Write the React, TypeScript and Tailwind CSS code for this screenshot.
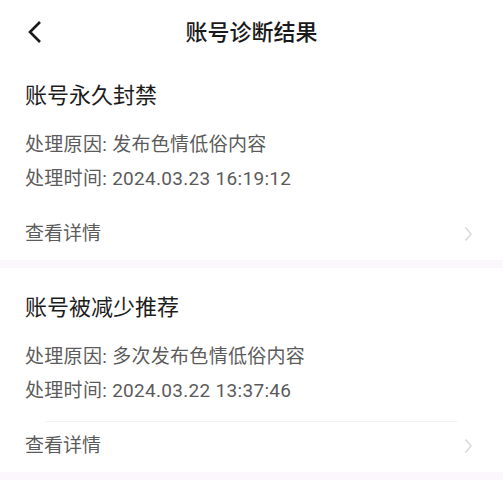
import React from 'react';

type Diagnosis = {
  title: string;
  reason: string;
  time: string;
  divider?: boolean;
};

const items: Diagnosis[] = [
  {
    title: '账号永久封禁',
    reason: '发布色情低俗内容',
    time: '2024.03.23 16:19:12'
  },
  {
    title: '账号被减少推荐',
    reason: '多次发布色情低俗内容',
    time: '2024.03.22 13:37:46',
    divider: true
  }
];

const font = {
  fontFamily: 'Roboto, "Noto Sans CJK SC", "Noto Sans", sans-serif'
};

const ResultCard = ({ item, first }: { item: Diagnosis; first: boolean }) => (
  <div className={first ? 'flex flex-col bg-white pt-[21px] pb-[2px]' : 'flex flex-col bg-white pt-[23px] pb-[2px]'}>
    <div className="px-[25px] h-[32px] flex items-center text-[22px] text-[#1c1c1c]">
      {item.title}
    </div>
    <div className="mt-[17px] px-[25px] flex flex-col text-[19px] tracking-[0.3px] text-[#5b5b5b]">
      <div className="h-[34px] flex items-center">处理原因: {item.reason}</div>
      <div className="h-[34px] flex items-center">处理时间: {item.time}</div>
    </div>
    <div className="mx-[45px] mt-[13px] h-px">
      {item.divider && <div className="h-px bg-[#f3f3f3]" />}
    </div>
    <div className="px-[25px] h-[48px] flex items-center justify-between text-[19px] text-[#5b5b5b]">
      <span>查看详情</span>
      <svg width="9" height="16" viewBox="0 0 9 16" className="mr-[5px]">
        <path d="M1.5 1.5 L7 8 L1.5 14.5" fill="none" stroke="#d6d6d6" strokeWidth="1.3" />
      </svg>
    </div>
  </div>
);

export default function App() {
  return (
    <div className="w-[503px] h-[500px] bg-white overflow-hidden" style={font}>
      <div className="relative h-[58px] pt-[6px] flex items-center justify-center">
        <svg
          width="16"
          height="24"
          viewBox="0 0 16 24"
          className="absolute left-[27px] top-[20px]"
        >
          <path d="M13 2 L3 12 L13 22" fill="none" stroke="#1a1a1a" strokeWidth="2.6" />
        </svg>
        <span className="text-[22px] font-medium text-[#1a1a1a]">账号诊断结果</span>
      </div>
      {items.map((item, i) => (
        <React.Fragment key={item.title}>
          <ResultCard item={item} first={i === 0} />
          <div className="h-[8px] bg-[#fcf7fc]" />
        </React.Fragment>
      ))}
    </div>
  );
}
